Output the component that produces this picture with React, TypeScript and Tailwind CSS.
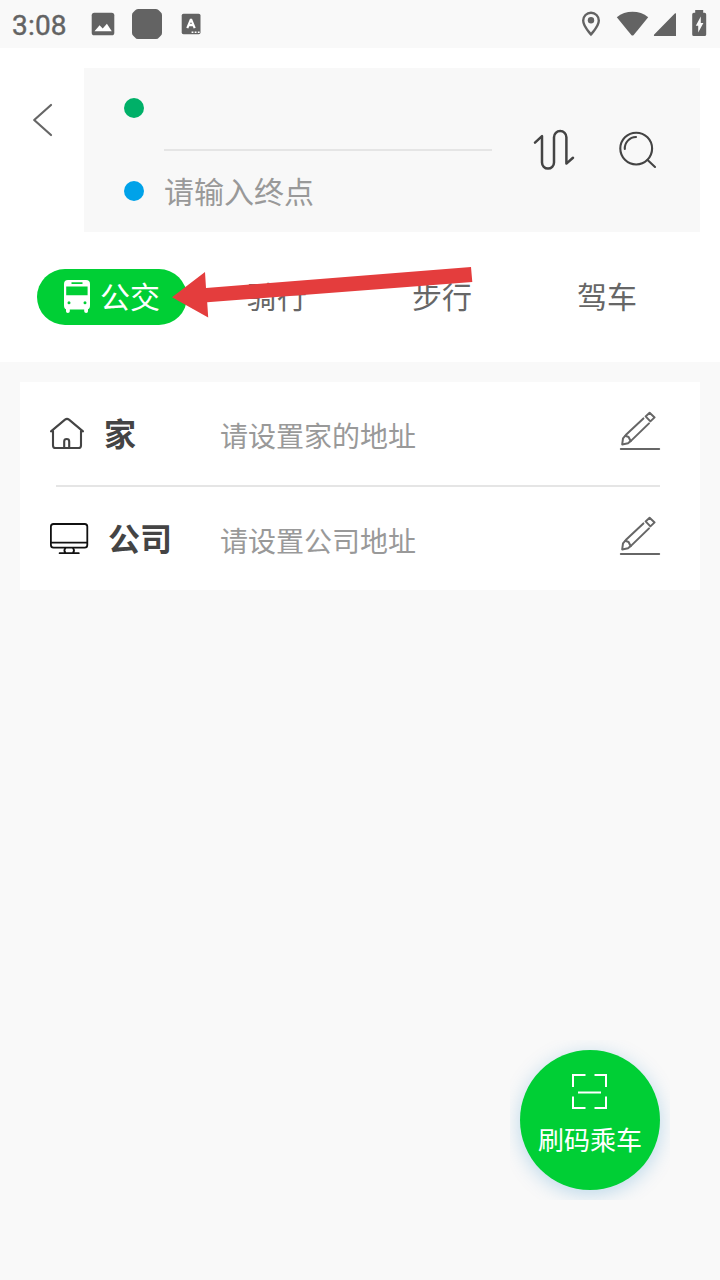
import React, { useState } from "react";

const PencilIcon = () => (
  <svg
    width="42"
    height="42"
    viewBox="619 410 42 42"
    fill="none"
    stroke="#666"
    strokeWidth="2"
    strokeLinejoin="round"
    strokeLinecap="round"
  >
    <path d="M643.4 418.4L626 434.8L623 438.4L622.2 444.4L628 443.2L631.2 440.6L649 423.4" />
    <path d="M625.4 435.8L628.6 437L630.6 441" />
    <path d="M649.6 412.8L654.6 417.4L650.4 421.4L645.6 416.4Z" />
    <path d="M620.8 449H659.2" />
  </svg>
);

const HomeIcon = () => (
  <svg
    width="36"
    height="36"
    viewBox="49 416 36 36"
    fill="none"
    stroke="#444"
    strokeWidth="2.1"
    strokeLinejoin="round"
    strokeLinecap="round"
  >
    <path d="M51 431.4L65 419.6Q67 418.2 69 419.6L83 431.4" />
    <path d="M53 431V445.4Q53 448 55.6 448H78.4Q81 448 81 445.4V431" />
    <path d="M64.2 448V441.4Q64.2 439 66.7 439Q69.2 439 69.2 441.4V448" />
  </svg>
);

const MonitorIcon = () => (
  <svg
    width="40"
    height="34"
    viewBox="49 522 40 34"
    fill="none"
    stroke="#111"
    strokeWidth="1.8"
    strokeLinecap="round"
  >
    <rect x="50.9" y="524" width="36.4" height="23.6" rx="2.6" />
    <path d="M51 542.6H87M65.4 548Q63.4 550.4 65.4 552.8M73 548Q75 550.4 73 552.8M59.6 553.2H78.8" />
  </svg>
);

const BusIcon = () => (
  <svg width="28" height="34" viewBox="63 279 28 34">
    <path
      fill="#fff"
      fillRule="evenodd"
      d="M68 280H86Q90 280 90 284V305Q90 309 88 309.2V311.2Q88 313 86.2 313Q84.2 313 84.2 311.2V309.4H69.8V311.2Q69.8 313 67.8 313Q66 313 66 311.2V309.2Q64 309 64 305V284Q64 280 68 280ZM71.500 282.2V284H82.5V282.2ZM66.2 286.6V295.2H87.6V286.6ZM69 301.2A1.500 1.5 0 1 0 69 304.2A1.5 1.5 0 1 0 69 301.2ZM85 301.2A1.5 1.5 0 1 0 85 304.2A1.5 1.5 0 1 0 85 301.2Z"
    />
  </svg>
);

const StatusBar = () => (
  <div className="flex h-12 items-center justify-between bg-[#f9f9f9] text-[#636363]">
    <div className="flex items-center pl-3">
      <span className="w-[78px] pt-[3px] font-[Roboto,sans-serif] text-[28px] leading-none tracking-[0.2px] [-webkit-text-stroke:0.4px_#636363]">
        3:08
      </span>
      <svg width="112" height="32" viewBox="90 8 112 32">
        <rect x="91.7" y="12.7" width="22.6" height="22.6" rx="2.6" fill="#636363" />
        <path d="M94.5 31.3L99.6 25.2L102.7 28.6L106.9 23.8L111.8 31.3Z" fill="#fff" />
        <path
          d="M138 9H156Q158 9 159 10.500L160.500 12Q162 13 162 15V33Q162 35 160.500 36L159 37.500Q158 39 156 39H138Q136 39 135 37.500L133.500 36Q132 35 132 33V15Q132 13 133.500 12L135 10.500Q136 9 138 9Z"
          fill="#636363"
        />
        <rect x="181.7" y="13.7" width="18.8" height="20.6" rx="1.8" fill="#636363" />
        <path
          d="M187.3 28.2L191 19.2L194.7 28.2M188.8 25.2H193.2"
          fill="none"
          stroke="#fff"
          strokeWidth="2.2"
          strokeLinejoin="bevel"
        />
        <path d="M191.6 32.2H199.8" stroke="#fff" strokeWidth="1.6" strokeDasharray="1.8 1.3" />
      </svg>
    </div>
    <svg width="130" height="32" viewBox="580 8 130 32" className="mr-[10px]" fill="#636363">
      <path
        fillRule="evenodd"
        d="M591 11.5A9 9 0 0 0 582 20.5C582 27 591 36.2 591 36.2C591 36.2 600 27 600 20.5A9 9 0 0 0 591 11.5ZM591 13.9A6.6 6.6 0 0 1 597.6 20.5C597.6 24.2 593.6 29.6 591 32.6C588.4 29.6 584.4 24.2 584.4 20.5A6.6 6.6 0 0 1 591 13.9Z"
      />
      <circle cx="591" cy="20.2" r="3.2" />
      <path d="M616.8 17.2C625.5 10 639.5 10 648.2 17.2L633.7 34.9Q632.5 36.2 631.3 34.9Z" />
      <path d="M676 13.2V36H654.2Q653.4 35.4 654.2 34.6L674.8 13.6Z" />
      <path
        fillRule="evenodd"
        d="M695.2 10H703.2V12.8H704.6Q706.2 12.8 706.2 14.4V34.4Q706.2 36 704.6 36H693.8Q692.2 36 692.2 34.4V14.4Q692.2 12.8 693.8 12.8H695.2ZM700.8 16.4L695.8 25.8H698.2V32.6L703.4 23H700.8Z"
      />
    </svg>
  </div>
);

const SearchPanel = () => (
  <div className="flex">
    <button className="ml-8 mt-[34px] h-9 w-[52px]">
      <svg
        width="22"
        height="36"
        viewBox="32 102 22 36"
        fill="none"
        stroke="#666"
        strokeWidth="2.2"
        strokeLinecap="round"
        strokeLinejoin="round"
      >
        <path d="M51 105L34.2 120L51 135" />
      </svg>
    </button>
    <div className="flex h-[164px] w-[616px] bg-[#f8f8f8] pl-10">
      <div className="w-[368px]">
        <div className="flex h-[81px] items-start pt-[30px]">
          <span className="size-5 rounded-full bg-[#00b068]" />
        </div>
        <div className="ml-10 h-0.5 bg-[#e5e5e5]" />
        <div className="flex h-20 items-center gap-5">
          <span className="size-5 rounded-full bg-[#00a2e9]" />
          <span className="pb-0.5 text-[30px] leading-10 text-[#999]">请输入终点</span>
        </div>
      </div>
      <div className="flex items-center gap-[43px] pl-[41px]">
        <svg
          width="42"
          height="42"
          viewBox="533 129 42 42"
          fill="none"
          stroke="#444"
          strokeWidth="2.5"
          strokeLinecap="round"
          strokeLinejoin="round"
        >
          <path d="M535 142.6L542 136.2V162.4A6 6.2 0 0 0 554 162.4V137.3A6.2 6.2 0 0 1 566.4 137.3V163.6L573 157.8" />
        </svg>
        <svg
          width="40"
          height="40"
          viewBox="618 130 40 40"
          fill="none"
          stroke="#444"
          strokeWidth="2.1"
          strokeLinecap="round"
        >
          <circle cx="636.2" cy="148.6" r="15.9" />
          <path d="M624.8 149A11.4 11.4 0 0 1 636 137" />
          <path d="M647.6 160L655 167" />
        </svg>
      </div>
    </div>
  </div>
);

const Tabs = () => {
  const [active, setActive] = useState("公交");

  return (
    <div className="mt-[37px] flex h-14 items-center pl-[37px] text-[30px] leading-10 text-[#666]">
      <button
        onClick={() => setActive("公交")}
        className={`mr-[60px] flex h-14 w-[150px] items-center gap-[9px] rounded-full pb-0.5 pl-[26px] ${
          active === "公交" ? "bg-[#00cf35] text-white" : "bg-[#00cf35] text-gray-100"
        }`}
      >
        <BusIcon />
        <span className="pb-[3px]">公交</span>
      </button>
      <div className="flex gap-[105px] pb-[5px]">
        {["骑行", "步行", "驾车"].map((tab) => (
          <button key={tab} onClick={() => setActive(tab)} className="w-[60px]">
            {tab}
          </button>
        ))}
      </div>
    </div>
  );
};

const App = () => {
  return (
    <div
      lang="zh-CN"
      className="relative h-[1280px] w-[720px] overflow-hidden bg-[#f9f9f9] font-['Noto_Sans_CJK_SC',sans-serif]"
    >
      <StatusBar />
      <header className="h-[314px] bg-white pt-5">
        <SearchPanel />
        <Tabs />
      </header>

      <main className="mx-5 mt-5 h-[208px] bg-white">
        <div className="flex h-[103px] items-center pl-[29px] pr-[39px]">
          <HomeIcon />
          <span className="ml-[19px] w-[116px] pb-[3px] text-[32px] font-bold text-[#444]">家</span>
          <span className="flex-1 pt-0.5 text-[28px] text-[#999]">请设置家的地址</span>
          <div className="-mt-[5px]">
            <PencilIcon />
          </div>
        </div>
        <div className="ml-9 mr-10 h-0.5 bg-[#e5e5e5]" />
        <div className="flex h-[103px] items-center pl-[29px] pr-[39px]">
          <MonitorIcon />
          <span className="ml-[19px] w-[112px] pb-[3px] text-[32px] font-bold text-[#444]">公司</span>
          <span className="flex-1 pt-0.5 text-[28px] text-[#999]">请设置公司地址</span>
          <div className="-mt-[5px]">
            <PencilIcon />
          </div>
        </div>
      </main>

      {/* Floating scan button, the glow is cut off by its square box */}
      <div className="absolute left-[510px] top-[1040px] size-40 overflow-hidden p-2.5">
        <button className="flex size-[140px] flex-col items-center rounded-full bg-[#00cf35] pt-6 text-white shadow-[0_4px_20px_rgba(0,120,190,0.25)]">
          <svg width="36" height="36" viewBox="0 0 36 36" fill="none" stroke="#fff" strokeWidth="2">
            <path d="M1 13V1H13.5M22.5 1H34V13M34 22.5V34H22.5M13.5 34H1V22.5M6 18.5H29" />
          </svg>
          <span className="mt-[11px] text-[26px] leading-9">刷码乘车</span>
        </button>
      </div>

      {/* Pointer to the bus tab */}
      <svg
        className="pointer-events-none absolute left-[170px] top-[264px]"
        width="304"
        height="56"
        viewBox="170 264 304 56"
      >
        <path
          d="M172 297.2L205 272L206 288L471 267L472.3 282L207.2 302.2L208.2 317.6Z"
          fill="#e43d3d"
        />
      </svg>
    </div>
  );
};

export default App;
